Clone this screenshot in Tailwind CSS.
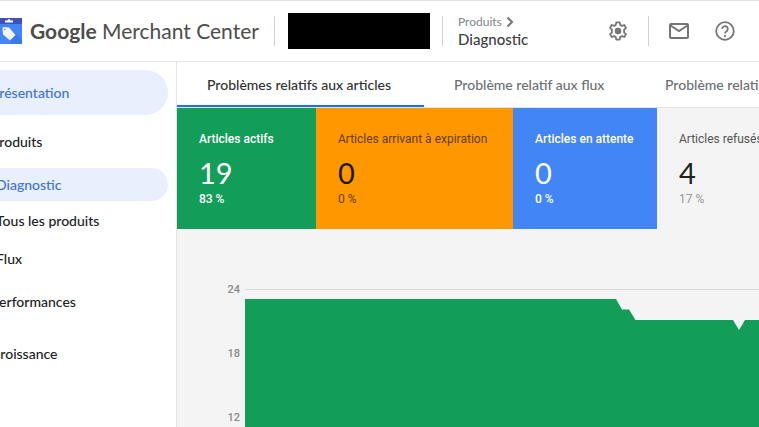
<!DOCTYPE html>
<html lang="fr">
<head>
    <meta charset="UTF-8">
    <meta name="viewport" content="width=device-width, initial-scale=1.0">
    <script src="https://cdn.jsdelivr.net/npm/@tailwindcss/browser@4"></script>
    <title>Google Merchant Center</title>
</head>
<body class="bg-white font-['Lato','Open_Sans',sans-serif] text-[#3c4043]">
    <div class="flex flex-col h-screen overflow-hidden">
        <header class="flex items-center shrink-0 h-[62px] border-y border-[#e4e4e4]">
            <a href="#" class="flex items-center shrink-0 w-[274px]">
                <!-- Logo -->
                <svg class="shrink-0 w-[22px] h-[26px]" viewBox="0 0 22 26">
                    <path fill="#4285f4" d="M0 0h21a1 1 0 0 1 1 1v24a1 1 0 0 1-1 1H0z"/>
                    <path fill="#3b78e7" d="M15 15l7 7v4H11l-1-4z"/>
                    <path fill="#3f51b5" d="M0 0h21a1 1 0 0 1 1 1v5H0z"/>
                    <path fill="#fff" d="M5 2.500h2.500a1.500 1.500 0 0 1 3 0H13v2H5z"/>
                    <path fill="#f5f5f5" d="M2.500 10l1-1L9 9.500l6.500 7.500-5.500 5.500L3 16.500z"/>
                    <circle cx="4.800" cy="11.500" r=".8" fill="#4285f4"/>
                </svg>
                <span class="ml-2 text-[21px] leading-7 text-[#4d4d4d] whitespace-nowrap"><span class="font-bold">Google</span> Merchant Center</span>
            </a>
            <div class="w-px h-[30px] bg-[#d0d0d0]"></div>
            <div class="shrink-0 w-[142px] h-9 ml-[13px] mr-3 bg-black"></div>
            <div class="w-px h-[30px] bg-[#d0d0d0]"></div>
            <div class="ml-[15px]">
                <a href="#" class="flex items-center gap-1 text-xs leading-4 text-[#80868b]">Produits
                    <svg class="w-2 h-3" viewBox="0 0 8 12" fill="none" stroke="#757575" stroke-width="2"><path d="M1.500 1.500L6 6l-4.500 4.500"/></svg>
                </a>
                <h1 class="text-[15px] leading-[18px] font-medium">Diagnostic</h1>
            </div>
            <div class="flex items-center ml-auto pr-6">
                <button type="button" aria-label="Paramètres" class="mr-5">
                    <svg class="w-5 h-5" viewBox="0 0 20 20" fill="none" stroke="#757575" stroke-width="1.800" stroke-linejoin="round">
                        <path d="M8.300 1.400h3.400l.5 2.500 1.700 1 2.400-.9L18 6.900l-1.900 1.700v2.800l1.900 1.700-1.700 2.900-2.400-.9-1.700 1-.5 2.500H8.300l-.5-2.500-1.700-1-2.400.9L2 13.100l1.900-1.700V8.600L2 6.900 3.700 4l2.400.9 1.700-1z"/>
                        <circle cx="10" cy="10" r="3.300" fill="#757575" stroke="none"/>
                    </svg>
                </button>
                <div class="w-px h-[30px] bg-[#d0d0d0]"></div>
                <button type="button" aria-label="Messages" class="ml-5">
                    <svg class="w-5 h-4" viewBox="0 0 20 16" fill="none" stroke="#757575" stroke-width="2">
                        <rect x="1" y="1" width="18" height="14" rx="1"/>
                        <path d="M1.500 2.500L10 8l8.500-5.500"/>
                    </svg>
                </button>
                <button type="button" aria-label="Aide" class="ml-[26px]">
                    <svg class="w-5 h-5" viewBox="0 0 20 20" fill="none" stroke="#757575" stroke-width="1.800">
                        <circle cx="10" cy="10" r="8.800"/>
                        <path d="M7.200 8a2.800 2.800 0 1 1 4.700 2c-1.200 1-1.900 1.400-1.900 2.600"/>
                        <path d="M10 14v2"/>
                    </svg>
                </button>
            </div>
        </header>

        <div class="flex flex-1 min-h-0">
            <nav class="shrink-0 w-[177px] overflow-hidden border-r border-[#e4e4e4] pt-2 pr-2 text-sm font-medium text-[#202124]">
                <ul class="-ml-3">
                    <li><a href="#" class="flex items-center h-[45px] rounded-r-full bg-[#e8f0fe] pl-[3px] text-[#4272db]">Présentation</a></li>
                    <li><a href="#" class="flex items-center h-[53px] pl-[3px]">Produits</a></li>
                    <li><a href="#" class="flex items-center h-[33px] rounded-r-full bg-[#e8f0fe] pl-2 text-[#4272db]">Diagnostic</a></li>
                    <li><a href="#" class="flex items-center h-10 pl-2">Tous les produits</a></li>
                    <li><a href="#" class="flex items-center h-[35px] pl-2">Flux</a></li>
                    <li><a href="#" class="flex items-center h-[52px] pl-[3px]">Performances</a></li>
                    <li><a href="#" class="flex items-center h-[52px] pl-[3px]">Croissance</a></li>
                </ul>
            </nav>

            <main class="flex-1 min-w-0 overflow-hidden bg-[#f4f4f4]">
                <div class="flex h-[46px] bg-white border-b border-[#e4e4e4] text-sm font-medium whitespace-nowrap text-[#6b6f73]">
                    <a href="#" class="flex items-center shrink-0 w-[247px] px-[30px] border-y-2 border-t-transparent border-b-[#1a73e8] text-[#303134]">Problèmes relatifs aux articles</a>
                    <a href="#" class="flex items-center shrink-0 w-[211px] px-[30px]">Problème relatif aux flux</a>
                    <a href="#" class="flex items-center shrink-0 px-[30px]">Problème relatif au compte</a>
                </div>

                <div class="flex h-[121px] font-[Roboto,sans-serif] text-xs whitespace-nowrap">
                    <section class="shrink-0 w-[139px] px-[22px] pt-[23px] bg-[#129d58] font-medium text-white">
                        <h2 class="leading-4">Articles actifs</h2>
                        <p class="mt-2 text-[29px] leading-9 font-['Lato'] font-normal">19</p>
                        <p class="leading-4">83 %</p>
                    </section>
                    <section class="shrink-0 w-[197px] px-[22px] pt-[23px] bg-[#ff9800] text-[#653c00]">
                        <h2 class="leading-4">Articles arrivant à expiration</h2>
                        <p class="mt-2 text-[29px] leading-9 font-['Lato'] text-[#21160a]">0</p>
                        <p class="leading-4">0 %</p>
                    </section>
                    <section class="shrink-0 w-[144px] px-[22px] pt-[23px] bg-[#4285f4] font-medium text-white">
                        <h2 class="leading-4">Articles en attente</h2>
                        <p class="mt-2 text-[29px] leading-9 font-['Lato'] font-normal">0</p>
                        <p class="leading-4">0 %</p>
                    </section>
                    <section class="shrink-0 px-[22px] pt-[23px] text-[#999]">
                        <h2 class="leading-4 text-[#555]">Articles refusés</h2>
                        <p class="mt-2 text-[29px] leading-9 font-['Lato'] text-[#212121]">4</p>
                        <p class="leading-4">17 %</p>
                    </section>
                </div>

                <!-- Graphique -->
                <div class="flex pt-[53px]">
                    <div class="shrink-0 w-[68px] pr-[5px] font-[Roboto,sans-serif] text-[11px] leading-4 font-medium text-right text-[#8a8a8a]">
                        <p class="h-16">24</p>
                        <p class="h-16">18</p>
                        <p class="h-16">12</p>
                    </div>
                    <svg class="flex-1 min-w-0 h-[254px] mt-[7px]" viewBox="0 0 514 254" preserveAspectRatio="none">
                        <path d="M0 .5H514" stroke="#dcdcdc"/>
                        <path fill="#129d58" d="M0 10H371L377 20.500H384L390.500 31H488L494 41L500 31H514V254H0z"/>
                    </svg>
                </div>
            </main>
        </div>
    </div>
</body>
</html>
